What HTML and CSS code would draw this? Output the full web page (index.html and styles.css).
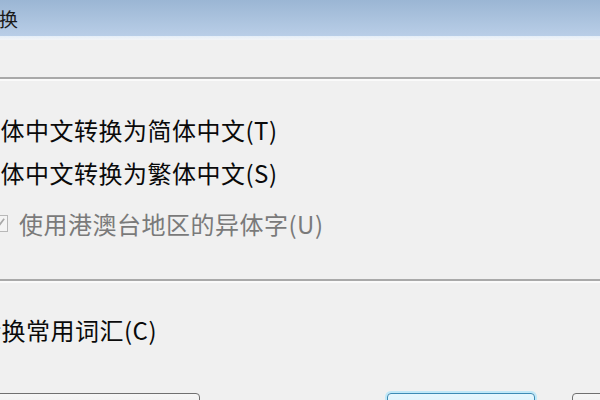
FILE: index.html
```html
<!DOCTYPE html>
<html lang="zh-CN">
<head>
<meta charset="utf-8">
<title>中文简繁转换</title>
<link rel="stylesheet" href="styles.css">
</head>
<body>
<div class="dialog">
  <div class="titlebar"><span class="title">中文简繁转换</span></div>
  <div class="title-edge"></div>
  <div class="content">
    <div class="group-line"></div>
    <div class="row row1">
      <span class="radio"></span>
      <span class="label">繁体中文转换为简体中文(T)</span>
    </div>
    <div class="row row2">
      <span class="radio checked"></span>
      <span class="label">繁体中文转换为繁体中文(S)</span>
    </div>
    <div class="row row3 disabled">
      <span class="check">
        <svg viewBox="0 0 16 16" width="16" height="16"><path d="M3 8.5 L6.5 12 L13 3.5" fill="none" stroke="#a8a8a8" stroke-width="1.8"/></svg>
      </span>
      <span class="label">使用港澳台地区的异体字(U)</span>
    </div>
    <div class="group-line line2"></div>
    <div class="row row4">
      <span class="check on">
        <svg viewBox="0 0 16 16" width="16" height="16"><path d="M3 8.5 L6.5 12 L13 3.5" fill="none" stroke="#333" stroke-width="1.8"/></svg>
      </span>
      <span class="label">转换常用词汇(C)</span>
    </div>
    <div class="buttons">
      <div class="btn btn-left">自定义词典(D)...</div>
      <div class="btn btn-default">确定</div>
      <div class="btn btn-right">取消</div>
    </div>
  </div>
</div>
</body>
</html>
```

FILE: styles.css
```css
html, body {
  margin: 0;
  padding: 0;
}
body {
  width: 600px;
  height: 400px;
  overflow: hidden;
  background: #f0f0f0;
  font-family: "Noto Sans CJK SC", "Noto Sans", sans-serif;
  color: #0a0a0a;
}
.dialog {
  width: 600px;
  height: 400px;
  display: flex;
  flex-direction: column;
}
.dialog > * {
  flex-shrink: 0;
}
.titlebar {
  height: 36px;
  background: linear-gradient(#9bb6d4, #b9cee7);
  display: flex;
  align-items: center;
  overflow: hidden;
}
.title {
  font-size: 19px;
  margin-left: -96px;
  color: #1a1a1a;
  white-space: nowrap;
}
.title-edge {
  height: 4px;
  background: linear-gradient(#e4eef8, #f3f5f7);
}
.content {
  display: flex;
  flex-direction: column;
}
.content > * {
  flex-shrink: 0;
}
.group-line {
  margin-top: 37px;
  height: 2px;
  background: #a9a9a9;
  border-bottom: 2px solid #fafafa;
}
.group-line.line2 {
  margin-top: 41px;
}
.row {
  display: flex;
  align-items: center;
  height: 30px;
  font-size: 24px;
  letter-spacing: 0.5px;
  white-space: nowrap;
}
.row1 { margin-top: 33px; margin-left: -55px; }
.row2 { margin-top: 13px; margin-left: -55px; }
.row3 { margin-top: 21px; margin-left: -9px; }
.row4 { margin-top: 31px; margin-left: -51px; }
.radio {
  width: 16px;
  height: 16px;
  border-radius: 50%;
  border: 1px solid #888;
  margin-right: 13px;
  background: #fff;
}
.check {
  width: 15px;
  height: 15px;
  border: 1px solid #b8b8b8;
  background: #f4f4f4;
  margin-right: 11px;
  display: flex;
  align-items: center;
  justify-content: center;
}
.check svg { display: block; }
.check.on { border-color: #707070; background: #fff; }
.disabled .label { color: #7a7a7a; }
.buttons {
  margin-top: 49px;
  display: flex;
  font-size: 20px;
}
.btn {
  height: 40px;
  border: 1px solid #707070;
  border-radius: 4px;
  background: linear-gradient(#f6f6f6, #dedede);
  display: flex;
  justify-content: center;
  padding-top: 8px;
  box-sizing: border-box;
  color: transparent;
  flex: none;
}
.btn-left {
  margin-left: -60px;
  width: 260px;
}
.btn-default {
  margin-left: 187px;
  width: 148px;
  border-color: #3c8ab4;
  background: linear-gradient(#e5f6fd, #c4e8f7);
  box-shadow: 0 0 0 2px #bfe8f8;
}
.btn-right {
  margin-left: 37px;
  width: 148px;
}
```
